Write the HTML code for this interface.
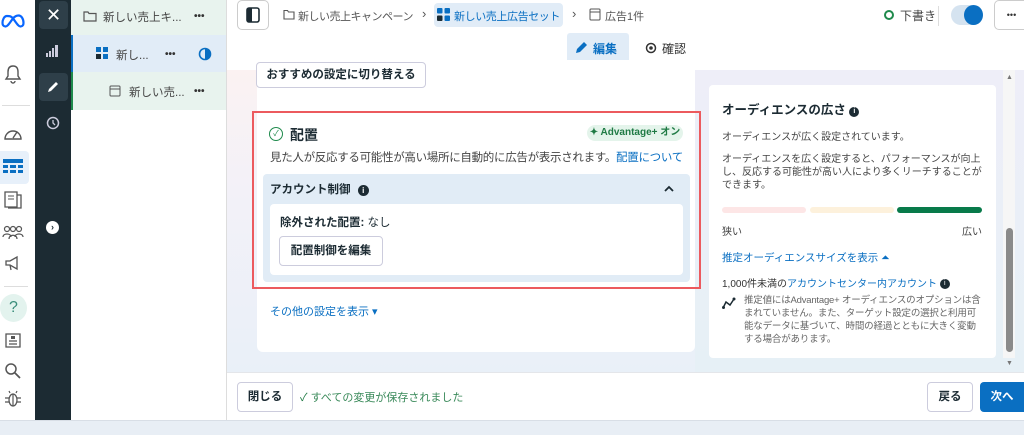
<!DOCTYPE html>
<html><head><meta charset="utf-8"><style>
*{box-sizing:border-box;margin:0;padding:0}
body{width:1024px;height:435px;overflow:hidden;position:relative;font-family:"Liberation Sans","Noto Sans CJK JP",sans-serif;background:#fff;color:#1c2b33}
.abs{position:absolute}
.dots{font-size:10px;letter-spacing:0px;color:#333;font-weight:bold}
</style></head><body>
<!-- left rail -->
<div class="abs" style="left:0;top:0;width:35px;height:420px;background:#fff"></div>
<svg class="abs" style="left:1px;top:14px" width="24" height="14" viewBox="0 0 24 14"><path d="M6 2C3 2 1.5 6 1.5 9 1.5 11 2.5 12.5 4.5 12.5 7 12.5 9 8 12 4.5 14 2 15.5 1.5 17.5 1.5 20.5 1.5 22.5 5 22.5 9 22.5 11 21.5 12.5 19.5 12.5 17 12.5 15 8 12 4.5 10 2 8.5 2 6 2Z" fill="none" stroke="#0866ff" stroke-width="2.2"/></svg>
<svg class="abs" style="left:4px;top:64px" width="18" height="20" viewBox="0 0 18 20"><path d="M9 2C5 2 4 5 4 8V12L2 15H16L14 12V8C14 5 13 2 9 2ZM7 17A2 2 0 0 0 11 17" fill="none" stroke="#555" stroke-width="1.4"/></svg>
<div class="abs" style="left:2px;top:105px;width:28px;height:1px;background:#ddd"></div>
<svg class="abs" style="left:3px;top:125px" width="20" height="18" viewBox="0 0 20 18"><path d="M2 14A8 8 0 1 1 18 14Z M10 13L14 7" fill="none" stroke="#555" stroke-width="1.4"/></svg>
<div class="abs" style="left:0;top:151px;width:29px;height:33px;background:#e7f0fa;border-radius:0 4px 4px 0"></div>
<svg class="abs" style="left:3px;top:159px" width="20" height="17" viewBox="0 0 20 17"><rect x="0" y="0" width="20" height="4" fill="#0a6fc2"/><g fill="#0a6fc2"><rect x="0" y="6" width="5" height="3"/><rect x="7" y="6" width="6" height="3"/><rect x="15" y="6" width="5" height="3"/><rect x="0" y="11" width="5" height="3"/><rect x="7" y="11" width="6" height="3"/><rect x="15" y="11" width="5" height="3"/></g></svg>
<svg class="abs" style="left:3px;top:190px" width="20" height="20" viewBox="0 0 20 20"><path d="M2 2H14V17H2Z M14 5H18V18H5" fill="none" stroke="#555" stroke-width="1.3"/><path d="M5 6H11M5 9H11" stroke="#555"/></svg>
<svg class="abs" style="left:2px;top:225px" width="22" height="16" viewBox="0 0 22 16"><g fill="none" stroke="#555" stroke-width="1.2"><circle cx="5" cy="4" r="2.5"/><circle cx="11" cy="4" r="2.5"/><circle cx="17" cy="4" r="2.5"/><path d="M1 12C1 8 9 8 9 12M7 14C7 9 15 9 15 14M13 12C13 8 21 8 21 12"/></g></svg>
<svg class="abs" style="left:4px;top:255px" width="18" height="18" viewBox="0 0 18 18"><path d="M2 6H6L13 2V14L6 10H2Z M6 10L7 15" fill="none" stroke="#555" stroke-width="1.3"/></svg>
<div class="abs" style="left:4px;top:286px;width:24px;height:1px;background:#ddd"></div>
<div class="abs" style="left:0;top:294px;width:27px;height:28px;border-radius:50%;background:#e3f3ee;color:#3a8d7a;font-size:16px;text-align:center;line-height:28px">?</div>
<svg class="abs" style="left:4px;top:332px" width="18" height="17" viewBox="0 0 18 17"><path d="M2 2H16V15H2Z M5 9H13M5 12H13" fill="none" stroke="#555" stroke-width="1.3"/><rect x="7" y="4" width="4" height="3" fill="#555"/></svg>
<svg class="abs" style="left:4px;top:362px" width="18" height="18" viewBox="0 0 18 18"><circle cx="7" cy="7" r="5" fill="none" stroke="#555" stroke-width="1.5"/><path d="M11 11L16 16" stroke="#555" stroke-width="1.8"/></svg>
<svg class="abs" style="left:4px;top:390px" width="18" height="18" viewBox="0 0 18 18"><ellipse cx="9" cy="10" rx="4" ry="6" fill="none" stroke="#555" stroke-width="1.3"/><path d="M5 8H1M5 12H1M13 8H17M13 12H17M9 4V16M6 3L5 1M12 3L13 1" stroke="#555" stroke-width="1.2"/></svg>
<!-- dark column -->
<div class="abs" style="left:35px;top:0;width:36px;height:420px;background:#1c2b33"></div>
<div class="abs" style="left:39px;top:1px;width:29px;height:28px;background:#2e3f49;border-radius:4px;color:#fff;font-size:18px;text-align:center;line-height:28px">✕</div>
<svg class="abs" style="left:46px;top:45px" width="14" height="12"><g fill="#ccd"><rect x="0" y="8" width="2" height="4"/><rect x="3" y="6" width="2" height="6"/><rect x="6" y="3" width="2" height="9"/><rect x="9" y="0" width="3" height="12"/></g></svg>
<div class="abs" style="left:39px;top:73px;width:29px;height:28px;background:#2e3f49;border-radius:4px"></div>
<svg class="abs" style="left:46px;top:80px" width="14" height="14"><path d="M2 12L3 9L10 2L12 4L5 11Z" fill="#fff"/></svg>
<svg class="abs" style="left:46px;top:116px" width="14" height="14"><circle cx="7" cy="7" r="5.5" fill="none" stroke="#ccd" stroke-width="1.5"/><path d="M7 4V7L9 9" stroke="#ccd" stroke-width="1.3" fill="none"/></svg>
<div class="abs" style="left:46px;top:221px;width:13px;height:13px;border-radius:50%;background:#fff;color:#1c2b33;font-size:9px;text-align:center;line-height:13px;font-weight:bold">›</div>
<!-- tree -->
<div class="abs" style="left:71px;top:0;width:155px;height:35px;background:#e8f3ee"></div>
<div class="abs" style="left:71px;top:35px;width:155px;height:37px;background:#e1ecf7;border-left:2px solid #0a6fc2"></div>
<div class="abs" style="left:71px;top:72px;width:155px;height:38px;background:#e8f3ee;border-left:2px solid #1f8a4c"></div>
<svg class="abs" style="left:83px;top:10px" width="14" height="12"><path d="M1 2H5L6 3.5H13V11H1Z" fill="none" stroke="#555" stroke-width="1.2"/></svg>
<div class="abs" style="left:103px;top:9px;font-size:11.5px;color:#444">新しい売上キ...</div>
<div class="abs dots" style="left:194px;top:11px">•••</div>
<svg class="abs" style="left:96px;top:47px" width="12" height="12"><g fill="#0a6fc2"><rect x="0" y="0" width="5" height="5"/><rect x="7" y="0" width="5" height="5"/><rect x="7" y="7" width="5" height="5"/></g><rect x="0" y="7" width="5" height="5" fill="#1c2b33"/></svg>
<div class="abs" style="left:116px;top:47px;font-size:11.5px;color:#444">新し...</div>
<div class="abs dots" style="left:165px;top:49px">•••</div>
<svg class="abs" style="left:198px;top:47px" width="14" height="14"><circle cx="7" cy="7" r="5.5" fill="none" stroke="#0a6fc2" stroke-width="1.6"/><path d="M7 1.5A5.5 5.5 0 0 1 7 12.5Z" fill="#0a6fc2"/></svg>
<svg class="abs" style="left:109px;top:85px" width="12" height="12"><rect x="1" y="1" width="10" height="10" rx="1" fill="none" stroke="#555"/><path d="M1 4H11" stroke="#555"/></svg>
<div class="abs" style="left:129px;top:84px;font-size:11.5px;color:#444">新しい売...</div>
<div class="abs dots" style="left:194px;top:86px">•••</div>
<div class="abs" style="left:226px;top:0;width:1px;height:420px;background:#ddd"></div>
<!-- header -->
<div class="abs" style="left:237px;top:0;width:32px;height:30px;border:1px solid #ccc;border-radius:5px"></div>
<svg class="abs" style="left:246px;top:7px" width="14" height="16"><rect x="1" y="1" width="12" height="14" rx="2" fill="none" stroke="#1c2b33" stroke-width="1.6"/><rect x="1" y="1" width="5" height="14" fill="#1c2b33"/></svg>
<svg class="abs" style="left:283px;top:9px" width="12" height="11"><path d="M1 1.5H4.5L5.5 3H11V10H1Z" fill="none" stroke="#555" stroke-width="1.1"/></svg>
<div class="abs" style="left:298px;top:8px;font-size:11px;color:#555;white-space:nowrap;letter-spacing:-0.5px">新しい売上キャンペーン</div>
<div class="abs" style="left:422px;top:6px;font-size:13px;color:#555">›</div>
<div class="abs" style="left:434px;top:3px;width:129px;height:24px;background:#e1ecf7;border-radius:4px"></div>
<svg class="abs" style="left:437px;top:8px" width="13" height="13"><g fill="#0a6fc2"><rect x="0" y="0" width="5.5" height="5.5" rx="1"/><rect x="7.5" y="0" width="5.5" height="5.5" rx="1"/><rect x="7.5" y="7.5" width="5.5" height="5.5" rx="1"/></g><rect x="0" y="7.5" width="5.5" height="5.5" rx="1" fill="#1c2b33"/></svg>
<div class="abs" style="left:454px;top:8px;font-size:11px;color:#0a6fc2;white-space:nowrap;letter-spacing:-0.4px">新しい売上広告セット</div>
<div class="abs" style="left:572px;top:6px;font-size:13px;color:#555">›</div>
<svg class="abs" style="left:589px;top:8px" width="12" height="13"><rect x="1" y="1" width="10" height="11" rx="1" fill="none" stroke="#555"/><path d="M1 4H11" stroke="#555"/></svg>
<div class="abs" style="left:605px;top:8px;font-size:11px;color:#555">広告1件</div>
<div class="abs" style="left:884px;top:10px;width:10px;height:10px;border-radius:50%;border:2px solid #1f8a4c"></div>
<div class="abs" style="left:900px;top:7px;font-size:12px;color:#444">下書き</div>
<div class="abs" style="left:938px;top:6px;width:1px;height:20px;background:#ddd"></div>
<div class="abs" style="left:951px;top:5px;width:30px;height:20px;background:#d5e3f0;border-radius:10px"></div>
<div class="abs" style="left:964px;top:5px;width:19px;height:20px;background:#0a6fc2;border-radius:50%"></div>
<div class="abs" style="left:994px;top:0;width:35px;height:30px;border:1px solid #ccc;border-radius:5px;font-size:9px;text-align:center;line-height:28px;color:#333">•••</div>
<div class="abs" style="left:567px;top:33px;width:62px;height:30px;background:#e1ecf7;border-radius:3px"></div>
<svg class="abs" style="left:575px;top:41px" width="13" height="13"><path d="M1 12L2 8L9 1L12 4L5 11Z" fill="#0a6fc2"/></svg>
<div class="abs" style="left:593px;top:40px;font-size:12px;font-weight:bold;color:#0a6fc2">編集</div>
<svg class="abs" style="left:645px;top:42px" width="12" height="12"><circle cx="6" cy="6" r="4.5" fill="none" stroke="#333" stroke-width="1.5"/><circle cx="6" cy="6" r="1.8" fill="#333"/></svg>
<div class="abs" style="left:662px;top:40px;font-size:12px;color:#333">確認</div>
<!-- content bg -->
<div class="abs" style="left:227px;top:70px;width:797px;height:302px;background:linear-gradient(180deg,#fbf2f2 0%,#f3f1f8 40%,#e9f0f8 100%)"></div>
<div class="abs" style="left:695px;top:70px;width:329px;height:302px;background:linear-gradient(180deg,#eeeef8,#e6f0f6)"></div>
<div class="abs" style="left:1003px;top:70px;width:12px;height:288px;background:#f6f6f6"></div>
<div class="abs" style="left:1006px;top:74px;font-size:7px;color:#777">▲</div>
<div class="abs" style="left:1006px;top:228px;width:7px;height:124px;background:#8a8a8a;border-radius:4px"></div>
<div class="abs" style="left:1006px;top:360px;font-size:7px;color:#777">▼</div>
<!-- main card -->
<div class="abs" style="left:257px;top:60px;width:438px;height:292px;background:#fff;border-radius:0 0 6px 6px"></div>
<div class="abs" style="left:256px;top:62px;width:170px;height:26px;border:1px solid #ccd;border-radius:4px;background:#fff;font-size:11.5px;font-weight:bold;text-align:center;line-height:24px;color:#1c2b33">おすすめの設定に切り替える</div>
<div class="abs" style="left:252px;top:111px;width:449px;height:178px;border:2px solid #ec5a5e"></div>
<div class="abs" style="left:269px;top:127px;width:14px;height:14px;border-radius:50%;border:1.5px solid #1f8a4c;font-size:8px;color:#1f8a4c;text-align:center;line-height:11px">✓</div>
<div class="abs" style="left:290px;top:125px;font-size:14px;font-weight:bold">配置</div>
<div class="abs" style="left:587px;top:125px;width:96px;height:16px;background:#e4f4eb;border-radius:8px;font-size:10px;font-weight:bold;color:#1f7a44;text-align:center;line-height:16px;white-space:nowrap">✦ Advantage+ オン</div>
<div class="abs" style="left:270px;top:149px;font-size:11.5px;color:#444;white-space:nowrap;letter-spacing:-0.3px">見た人が反応する可能性が高い場所に自動的に広告が表示されます。<span style="color:#0a6fc2">配置について</span></div>
<div class="abs" style="left:263px;top:174px;width:427px;height:108px;background:#e1ecf6;border-radius:4px"></div>
<div class="abs" style="left:270px;top:181px;font-size:11.5px;font-weight:bold">アカウント制御 <span style="display:inline-block;width:11px;height:11px;border-radius:50%;background:#1c2b33;color:#fff;font-size:8px;text-align:center;line-height:11px;margin-left:4px">i</span></div>
<svg class="abs" style="left:664px;top:185px" width="10" height="7"><path d="M1 6L5 2L9 6" fill="none" stroke="#1c2b33" stroke-width="1.8"/></svg>
<div class="abs" style="left:270px;top:204px;width:413px;height:71px;background:#fff;border-radius:4px"></div>
<div class="abs" style="left:280px;top:214px;font-size:11.5px"><b>除外された配置:</b> なし</div>
<div class="abs" style="left:279px;top:236px;width:104px;height:30px;border:1px solid #ccd;border-radius:4px;font-size:11.5px;font-weight:bold;text-align:center;line-height:28px">配置制御を編集</div>
<div class="abs" style="left:270px;top:303px;font-size:11px;color:#0a6fc2">その他の設定を表示 ▾</div>
<!-- right card -->
<div class="abs" style="left:709px;top:85px;width:287px;height:273px;background:#fff;border-radius:4px"></div>
<div class="abs" style="left:722px;top:99px;font-size:12.5px;font-weight:bold;white-space:nowrap">オーディエンスの広さ <span style="display:inline-block;width:10px;height:10px;border-radius:50%;background:#1c2b33;color:#fff;font-size:7px;text-align:center;line-height:10px;vertical-align:1px">i</span></div>
<div class="abs" style="left:722px;top:128px;font-size:10px;color:#444">オーディエンスが広く設定されています。</div>
<div class="abs" style="left:722px;top:153px;width:262px;font-size:10px;color:#444;line-height:13px">オーディエンスを広く設定すると、パフォーマンスが向上し、反応する可能性が高い人により多くリーチすることができます。</div>
<div class="abs" style="left:722px;top:207px;width:84px;height:6px;border-radius:3px;background:#fde6e6"></div>
<div class="abs" style="left:810px;top:207px;width:84px;height:6px;border-radius:3px;background:#fdf1dc"></div>
<div class="abs" style="left:897px;top:207px;width:85px;height:6px;border-radius:3px;background:#087a4a"></div>
<div class="abs" style="left:722px;top:223px;font-size:10px;color:#444">狭い</div>
<div class="abs" style="left:962px;top:223px;font-size:10px;color:#444">広い</div>
<div class="abs" style="left:722px;top:250px;font-size:10.5px;color:#0a6fc2;white-space:nowrap">推定オーディエンスサイズを表示 ⏶</div>
<div class="abs" style="left:722px;top:275px;font-size:10px;color:#333;white-space:nowrap">1,000件未満の<span style="color:#0a6fc2">アカウントセンター内アカウント</span> <span style="display:inline-block;width:10px;height:10px;border-radius:50%;background:#1c2b33;color:#fff;font-size:7px;text-align:center;line-height:10px;vertical-align:2px">i</span></div>
<svg class="abs" style="left:722px;top:297px" width="14" height="12"><path d="M1 11L4 5L8 8L12 2" fill="none" stroke="#1c2b33" stroke-width="1.5"/><circle cx="1.5" cy="10.5" r="1.5" fill="#1c2b33"/><circle cx="12" cy="2" r="1.5" fill="#1c2b33"/></svg>
<div class="abs" style="left:744px;top:294px;width:240px;font-size:9.5px;color:#666;line-height:13px;letter-spacing:-0.2px">推定値にはAdvantage+ オーディエンスのオプションは含まれていません。また、ターゲット設定の選択と利用可能なデータに基づいて、時間の経過とともに大きく変動する場合があります。</div>
<!-- bottom bar -->
<div class="abs" style="left:227px;top:372px;width:797px;height:48px;background:#fff;border-top:1px solid #e4e6ea"></div>
<div class="abs" style="left:237px;top:382px;width:56px;height:30px;border:1px solid #ccd;border-radius:4px;font-size:11.5px;font-weight:bold;text-align:center;line-height:28px">閉じる</div>
<div class="abs" style="left:300px;top:389px;font-size:11px;color:#1f7a44;white-space:nowrap">✓ <span style="color:#3a8a5a">すべての変更が保存されました</span></div>
<div class="abs" style="left:927px;top:382px;width:46px;height:30px;border:1px solid #ccd;border-radius:4px;font-size:11.5px;font-weight:bold;text-align:center;line-height:28px">戻る</div>
<div class="abs" style="left:980px;top:382px;width:50px;height:30px;background:#0a6fc2;border-radius:4px;font-size:11.5px;font-weight:bold;color:#fff;text-align:center;line-height:30px;padding-right:6px">次へ</div>
<div class="abs" style="left:0;top:420px;width:1024px;height:15px;background:#e8eef5;border-top:1px solid #d8dee6"></div>
</body></html>
